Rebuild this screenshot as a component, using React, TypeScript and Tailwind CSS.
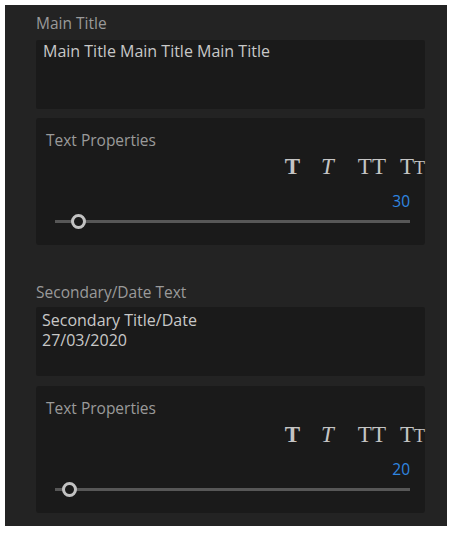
import React from "react";

const font = { fontFamily: '"Open Sans", "Noto Sans", sans-serif' };

function Slider({ knob }: { knob: number }) {
  return (
    <div className="relative h-[14px] ml-[19px] mr-[15px]">
      <div className="absolute left-0 right-0 top-[5px] h-[3px] bg-[#575757]" />
      <div
        className="absolute top-[-1px] w-[15px] h-[15px] rounded-full border-[3px] border-[#c2c2c2] bg-[#1a1a1a]"
        style={{ left: knob - 7 }}
      />
    </div>
  );
}

function Props({ value, knob }: { value: string; knob: number }) {
  return (
    <div className="h-[127px] bg-[#1a1a1a] rounded-[3px] flex flex-col">
      <div className="pl-[10px] pt-[13px] text-[15.5px] leading-[18px] text-[#9a9a9a]">Text Properties</div>
      <div
        className="flex items-center justify-end mt-[8px] h-[20px] text-[23px] text-[#c4c4c4]"
        style={{ fontFamily: '"Liberation Serif", "DejaVu Serif", serif' }}
      >
        <span className="font-bold">T</span>
        <span className="italic ml-[21px]">T</span>
        <span className="ml-[24px]">TT</span>
        <span className="ml-[14px]">T<span className="text-[18px]">T</span></span>
      </div>
      <div className="flex justify-end pr-[15px] mt-[15px] text-[15.5px] leading-[18px] text-[#2f86e0]">{value}</div>
      <div className="mt-[5px]">
        <Slider knob={knob} />
      </div>
    </div>
  );
}

export default function App() {
  return (
    <div className="bg-white w-[450px] h-[533px] p-[5px] pr-[3px]" style={font}>
      <div className="w-[442px] h-[521px] bg-[#232323] pl-[31px] pr-[22px] pt-[9px] flex flex-col">
        <div className="text-[15.5px] leading-[18px] text-[#9a9a9a]">Main Title</div>
        <div className="mt-[8px] h-[69px] bg-[#1a1a1a] rounded-[2px] px-[7px] pt-[1px] text-[16px] leading-[20px] text-[#c8c8c8]">
          Main Title Main Title Main Title
        </div>
        <div className="mt-[9px]">
          <Props value="30" knob={23} />
        </div>
        <div className="mt-[38px] text-[15.5px] leading-[18px] text-[#9a9a9a]">Secondary/Date Text</div>
        <div className="mt-[6px] h-[69px] bg-[#1a1a1a] rounded-[2px] px-[6px] pt-[3px] text-[16px] leading-[20px] text-[#c8c8c8]">
          <div>Secondary Title/Date</div>
          <div>27/03/2020</div>
        </div>
        <div className="mt-[10px]">
          <Props value="20" knob={14} />
        </div>
      </div>
    </div>
  );
}
